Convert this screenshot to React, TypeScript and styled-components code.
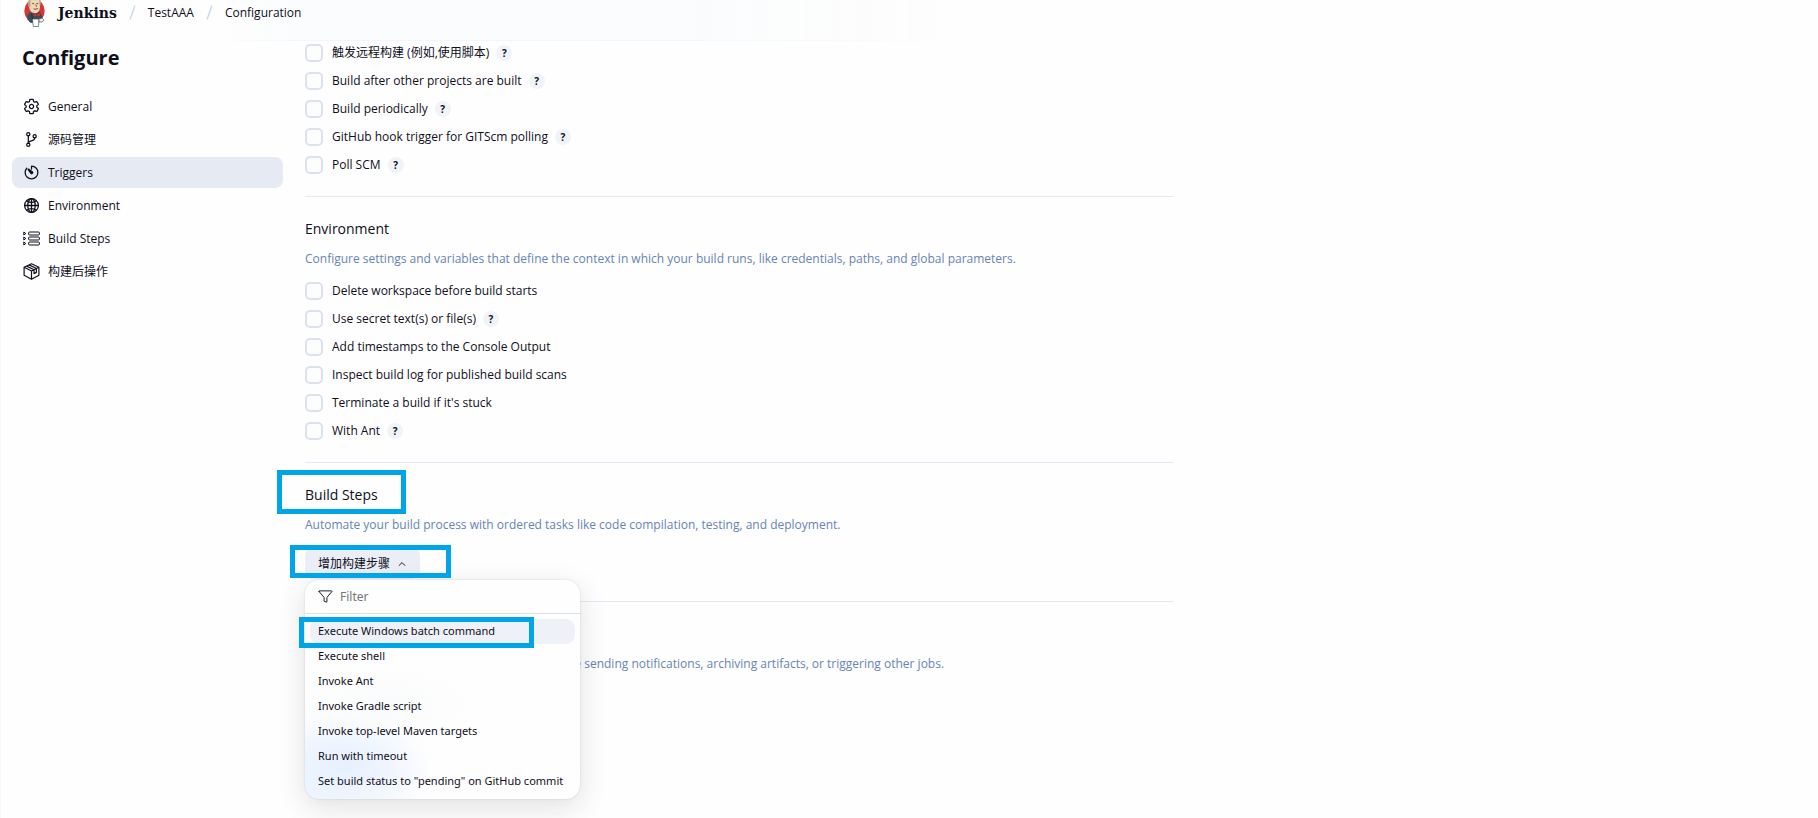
import React from "react";
import styled, { createGlobalStyle } from "styled-components";
import {
  IoChevronUp,
  IoFunnelOutline,
  IoGitBranchOutline,
  IoGlobeOutline,
  IoSettingsOutline,
  IoTimerOutline,
} from "react-icons/io5";

const ink = "#0f0f1c";
const muted = "#6585b4";
const rule = "#e4e9f5";

const GlobalStyle = createGlobalStyle`
  *, *::before, *::after { box-sizing: border-box; }
  body {
    margin: 0;
    background: #fefefe;
    color: ${ink};
    font: 400 12px/20px "Open Sans", "Noto Sans CJK SC", sans-serif;
  }
  button, input { font: inherit; color: inherit; }
`;

const Page = styled.div`
  min-height: 100vh;
  border-left: 1px solid #f8f8fa;
`;

const Header = styled.header`
  height: 41px;
  padding-left: 23px;
  background: linear-gradient(to right, transparent 220px, #fafcfd 320px, #fbfcfd 700px, transparent 960px);
  border-bottom: 1px solid transparent;
  border-image: linear-gradient(to right, transparent 220px, #f2f5f9 320px, #f5f7fa 700px, transparent 960px) 1;
`;

const Breadcrumbs = styled.nav`
  display: flex;
  align-items: center;
  height: 25px;
  gap: 12px;

  svg { flex: none; overflow: visible; }
`;

const Crumb = styled.a`
  color: inherit;
  text-decoration: none;
`;

const Brand = styled(Crumb)`
  display: flex;
  align-items: center;
  gap: 12px;
  font: 700 14px/20px "DejaVu Serif", serif;
`;

const Columns = styled.div`
  display: grid;
  grid-template-columns: 282px minmax(0, 869px);
  column-gap: 22px;
`;

const Sidebar = styled.aside`
  padding: 3px 0 0 11px;
`;

const PageTitle = styled.h1`
  margin: 0 0 19px;
  padding-left: 10px;
  font-size: 20px;
  line-height: 28px;
  font-weight: 700;
`;

const TaskList = styled.ul`
  display: grid;
  gap: 2px;
  margin: 0;
  padding: 0;
  list-style: none;
`;

const TaskLink = styled.a<{ $active?: boolean }>`
  display: flex;
  align-items: center;
  gap: 8px;
  height: 31px;
  padding-left: 11px;
  border-radius: 8px;
  background: ${(p) => (p.$active ? "#e6eaf2" : "transparent")};
  color: inherit;
  text-decoration: none;

  svg { width: 17px; height: 17px; flex: none; }
  svg[viewBox="0 0 512 512"] * { stroke-width: 38px; }
`;

const Main = styled.main`
  padding: 3px 0 40px;
`;

const Section = styled.section`
  padding-bottom: 22px;

  & + & {
    padding-top: 22px;
    border-top: 1px solid ${rule};
  }
`;

const SectionTitle = styled.h2`
  position: relative;
  width: fit-content;
  margin: 0 0 10px;
  font-size: 14px;
  line-height: 20px;
  font-weight: 400;
`;

const Description = styled.p`
  margin: 0 0 13px;
  color: ${muted};
`;

const Options = styled.div`
  display: grid;
  gap: 10px;
`;

const OptionRow = styled.div`
  display: flex;
  align-items: center;
  gap: 7px;
  height: 18px;
`;

const OptionLabel = styled.label`
  display: flex;
  align-items: center;
  gap: 9px;
`;

const Checkbox = styled.input`
  appearance: none;
  width: 18px;
  height: 18px;
  margin: 0;
  border: 2px solid #dce1ef;
  border-radius: 5px;
  background: #fdfdfe;
`;

const HelpButton = styled.button`
  width: 16px;
  height: 16px;
  padding: 0;
  border: 0;
  border-radius: 50%;
  background: #f0f4f8;
  font-size: 10px;
  line-height: 16px;
  font-weight: 700;
`;

const StepPicker = styled.div`
  position: relative;
  width: fit-content;
`;

const AddStepButton = styled.button`
  display: flex;
  align-items: center;
  gap: 7px;
  height: 31px;
  padding: 0 13px;
  border: 0;
  border-radius: 8px;
  background: #ebeef5;
`;

const Menu = styled.div`
  position: absolute;
  z-index: 1;
  top: 100%;
  left: 0;
  width: 275px;
  margin-top: 1px;
  border-radius: 14px;
  background:
    radial-gradient(ellipse 90px 50px at 40px 186px, #e6f0ff, transparent),
    radial-gradient(ellipse 130px 90px at 0 210px, #f0f6ff, transparent),
    radial-gradient(ellipse 90px 40px at 80px 125px, #fafbfc, transparent),
    #fefefe;
  box-shadow: 0 0 2px rgba(20, 20, 40, 0.16), 0 8px 28px rgba(20, 20, 40, 0.13);
  font: 400 11px/20px "Noto Sans", "Noto Sans CJK SC", sans-serif;
`;

const FilterRow = styled.label`
  display: flex;
  align-items: center;
  gap: 7px;
  height: 34px;
  padding: 0 13px;
  border-bottom: 1px solid #d9dfec;
`;

const FilterInput = styled.input`
  flex: 1;
  min-width: 0;
  padding: 0;
  border: 0;
  outline: 0;
  background: transparent;
  font-size: 12px;

  &::placeholder { color: #757575; opacity: 1; }
`;

const MenuList = styled.ul`
  margin: 0;
  padding: 5px;
  list-style: none;
`;

const MenuEntry = styled.li`
  position: relative;
`;

const MenuButton = styled.button<{ $active?: boolean }>`
  display: block;
  width: 100%;
  height: 25px;
  padding: 0 8px 2px;
  border: 0;
  border-radius: 9px;
  background: ${(p) => (p.$active ? "#eef1f7" : "transparent")};
  text-align: left;
  white-space: nowrap;
`;

/* Blue frame drawn over the element it calls attention to. */
const Marker = styled.span<{ $inset: string }>`
  position: absolute;
  z-index: 2;
  inset: ${(p) => p.$inset};
  border: 5px solid #00a4e9;
  pointer-events: none;
`;

function JenkinsLogo() {
  return (
    <svg width="22" height="25" viewBox="0 0 22 25" aria-hidden="true">
      <ellipse cx="10.5" cy="11" rx="10.2" ry="11.5" fill="#d33833" />
      <path d="M3.5 15 Q5 12 9 12 L15 12 Q19 14 18.6 22 L7 23 Q3 21 3.5 15Z" fill="#335061" />
      <path d="M5 0 Q3.6 4 5.2 8 Q6.5 12.5 10.5 13.5 Q15.5 13 16 7 L16 0Z" fill="#f0d6b7" />
      <path d="M4.6 0 Q3.4 5 5.4 8 L6.6 6 L6.5 0Z M15 0 L16.6 0 Q17 4 15.8 7Z" fill="#b9aa98" />
      <path d="M8.2 3.6 h2 M12.4 3.6 h2 M9.5 8.8 Q12 10 14 8.4 M11.8 4.5 l.7 2.2" fill="none" stroke="#49322a" strokeWidth=".8" />
      <path d="M9.5 13 L12.5 14.5 L16 12.5 L16.2 16.5 L12.7 15.8 L10 17Z" fill="#d33833" stroke="#81211f" strokeWidth=".5" />
      <path d="M7.5 14 L9 21" stroke="#1c2f3b" strokeWidth=".9" />
      <path d="M8.4 19 L15 19 L14.5 26.5 L9.3 26.5Z" fill="#fff" stroke="#4b5158" strokeWidth=".7" />
      <path d="M15 19 Q19.5 17 19.8 20.5 Q18 23 15 21.5Z" fill="#f0eee8" stroke="#4b5158" strokeWidth=".6" />
    </svg>
  );
}

function Slash() {
  return (
    <svg width="7" height="15" viewBox="0 0 7 15" aria-hidden="true">
      <path d="M6 .5 1 14.5" stroke="#c6d9f0" strokeWidth="1.4" />
    </svg>
  );
}

function StepsIcon() {
  return (
    <svg viewBox="0 0 17 17" fill="none" stroke="currentColor" aria-hidden="true">
      {[2, 7, 12].map((y) => (
        <g key={y}>
          <rect x="5.6" y={y} width="10.8" height="3" rx="1" />
          <path d={`M.8 ${y} 2.8 ${y + 1.5} .8 ${y + 3}Z`} />
        </g>
      ))}
    </svg>
  );
}

function PackageIcon() {
  return (
    <svg viewBox="0 0 17 17" fill="none" stroke="currentColor" strokeWidth="1.2" strokeLinejoin="round" aria-hidden="true">
      <path d="M8.5.8 15.9 4.3V12.2L8.5 16.2 1.1 12.2V4.3Z" />
      <path d="M1.1 4.3 8.5 8 15.9 4.3M8.5 8V16.2M3.7 3.1 11 6.8V10.6L13.4 9.4V5.5L6.1 1.9" />
    </svg>
  );
}

const tasks = [
  { name: "General", icon: <IoSettingsOutline /> },
  { name: "源码管理", icon: <IoGitBranchOutline /> },
  { name: "Triggers", icon: <IoTimerOutline />, active: true },
  { name: "Environment", icon: <IoGlobeOutline /> },
  { name: "Build Steps", icon: <StepsIcon /> },
  { name: "构建后操作", icon: <PackageIcon /> },
];

type OptionData = { name: string; help?: boolean };

const triggers: OptionData[] = [
  { name: "触发远程构建 (例如,使用脚本)", help: true },
  { name: "Build after other projects are built", help: true },
  { name: "Build periodically", help: true },
  { name: "GitHub hook trigger for GITScm polling", help: true },
  { name: "Poll SCM", help: true },
];

const environment: OptionData[] = [
  { name: "Delete workspace before build starts" },
  { name: "Use secret text(s) or file(s)", help: true },
  { name: "Add timestamps to the Console Output" },
  { name: "Inspect build log for published build scans" },
  { name: "Terminate a build if it's stuck" },
  { name: "With Ant", help: true },
];

const steps = [
  "Execute Windows batch command",
  "Execute shell",
  "Invoke Ant",
  "Invoke Gradle script",
  "Invoke top-level Maven targets",
  "Run with timeout",
  'Set build status to "pending" on GitHub commit',
];

function OptionGroup({ items }: { items: OptionData[] }) {
  return (
    <Options>
      {items.map((item) => (
        <OptionRow key={item.name}>
          <OptionLabel>
            <Checkbox type="checkbox" />
            {item.name}
          </OptionLabel>
          {item.help && (
            <HelpButton type="button" aria-label={`Help for ${item.name}`}>
              ?
            </HelpButton>
          )}
        </OptionRow>
      ))}
    </Options>
  );
}

export default function App() {
  return (
    <>
      <GlobalStyle />
      <Page>
        <Header>
          <Breadcrumbs aria-label="Breadcrumb">
            <Brand href="#">
              <JenkinsLogo />
              Jenkins
            </Brand>
            <Slash />
            <Crumb href="#">TestAAA</Crumb>
            <Slash />
            <Crumb href="#">Configuration</Crumb>
          </Breadcrumbs>
        </Header>
        <Columns>
          <Sidebar>
            <PageTitle>Configure</PageTitle>
            <TaskList>
              {tasks.map((task) => (
                <li key={task.name}>
                  <TaskLink href="#" $active={task.active}>
                    {task.icon}
                    {task.name}
                  </TaskLink>
                </li>
              ))}
            </TaskList>
          </Sidebar>
          <Main>
            <Section>
              <OptionGroup items={triggers} />
            </Section>
            <Section>
              <SectionTitle>Environment</SectionTitle>
              <Description>
                Configure settings and variables that define the context in which your build runs, like credentials,
                paths, and global parameters.
              </Description>
              <OptionGroup items={environment} />
            </Section>
            <Section>
              <SectionTitle>
                Build Steps
                <Marker $inset="-15px -28px -9px -28px" />
              </SectionTitle>
              <Description>
                Automate your build process with ordered tasks like code compilation, testing, and deployment.
              </Description>
              <StepPicker>
                <AddStepButton type="button" aria-expanded="true">
                  增加构建步骤
                  <IoChevronUp size={10} strokeWidth={16} />
                </AddStepButton>
                <Marker $inset="-3px -31px 1px -15px" />
                <Menu>
                  <FilterRow>
                    <IoFunnelOutline size={15} />
                    <FilterInput type="text" placeholder="Filter" aria-label="Filter" />
                  </FilterRow>
                  <MenuList>
                    {steps.map((step, i) => (
                      <MenuEntry key={step}>
                        <MenuButton type="button" $active={i === 0}>
                          {step}
                        </MenuButton>
                        {i === 0 && <Marker $inset="-2px 41px -4px -11px" />}
                      </MenuEntry>
                    ))}
                  </MenuList>
                </Menu>
              </StepPicker>
            </Section>
            <Section>
              <SectionTitle>构建后操作</SectionTitle>
              <Description>
                Define what happens after a build completes, like sending notifications, archiving artifacts, or
                triggering other jobs.
              </Description>
            </Section>
          </Main>
        </Columns>
      </Page>
    </>
  );
}
